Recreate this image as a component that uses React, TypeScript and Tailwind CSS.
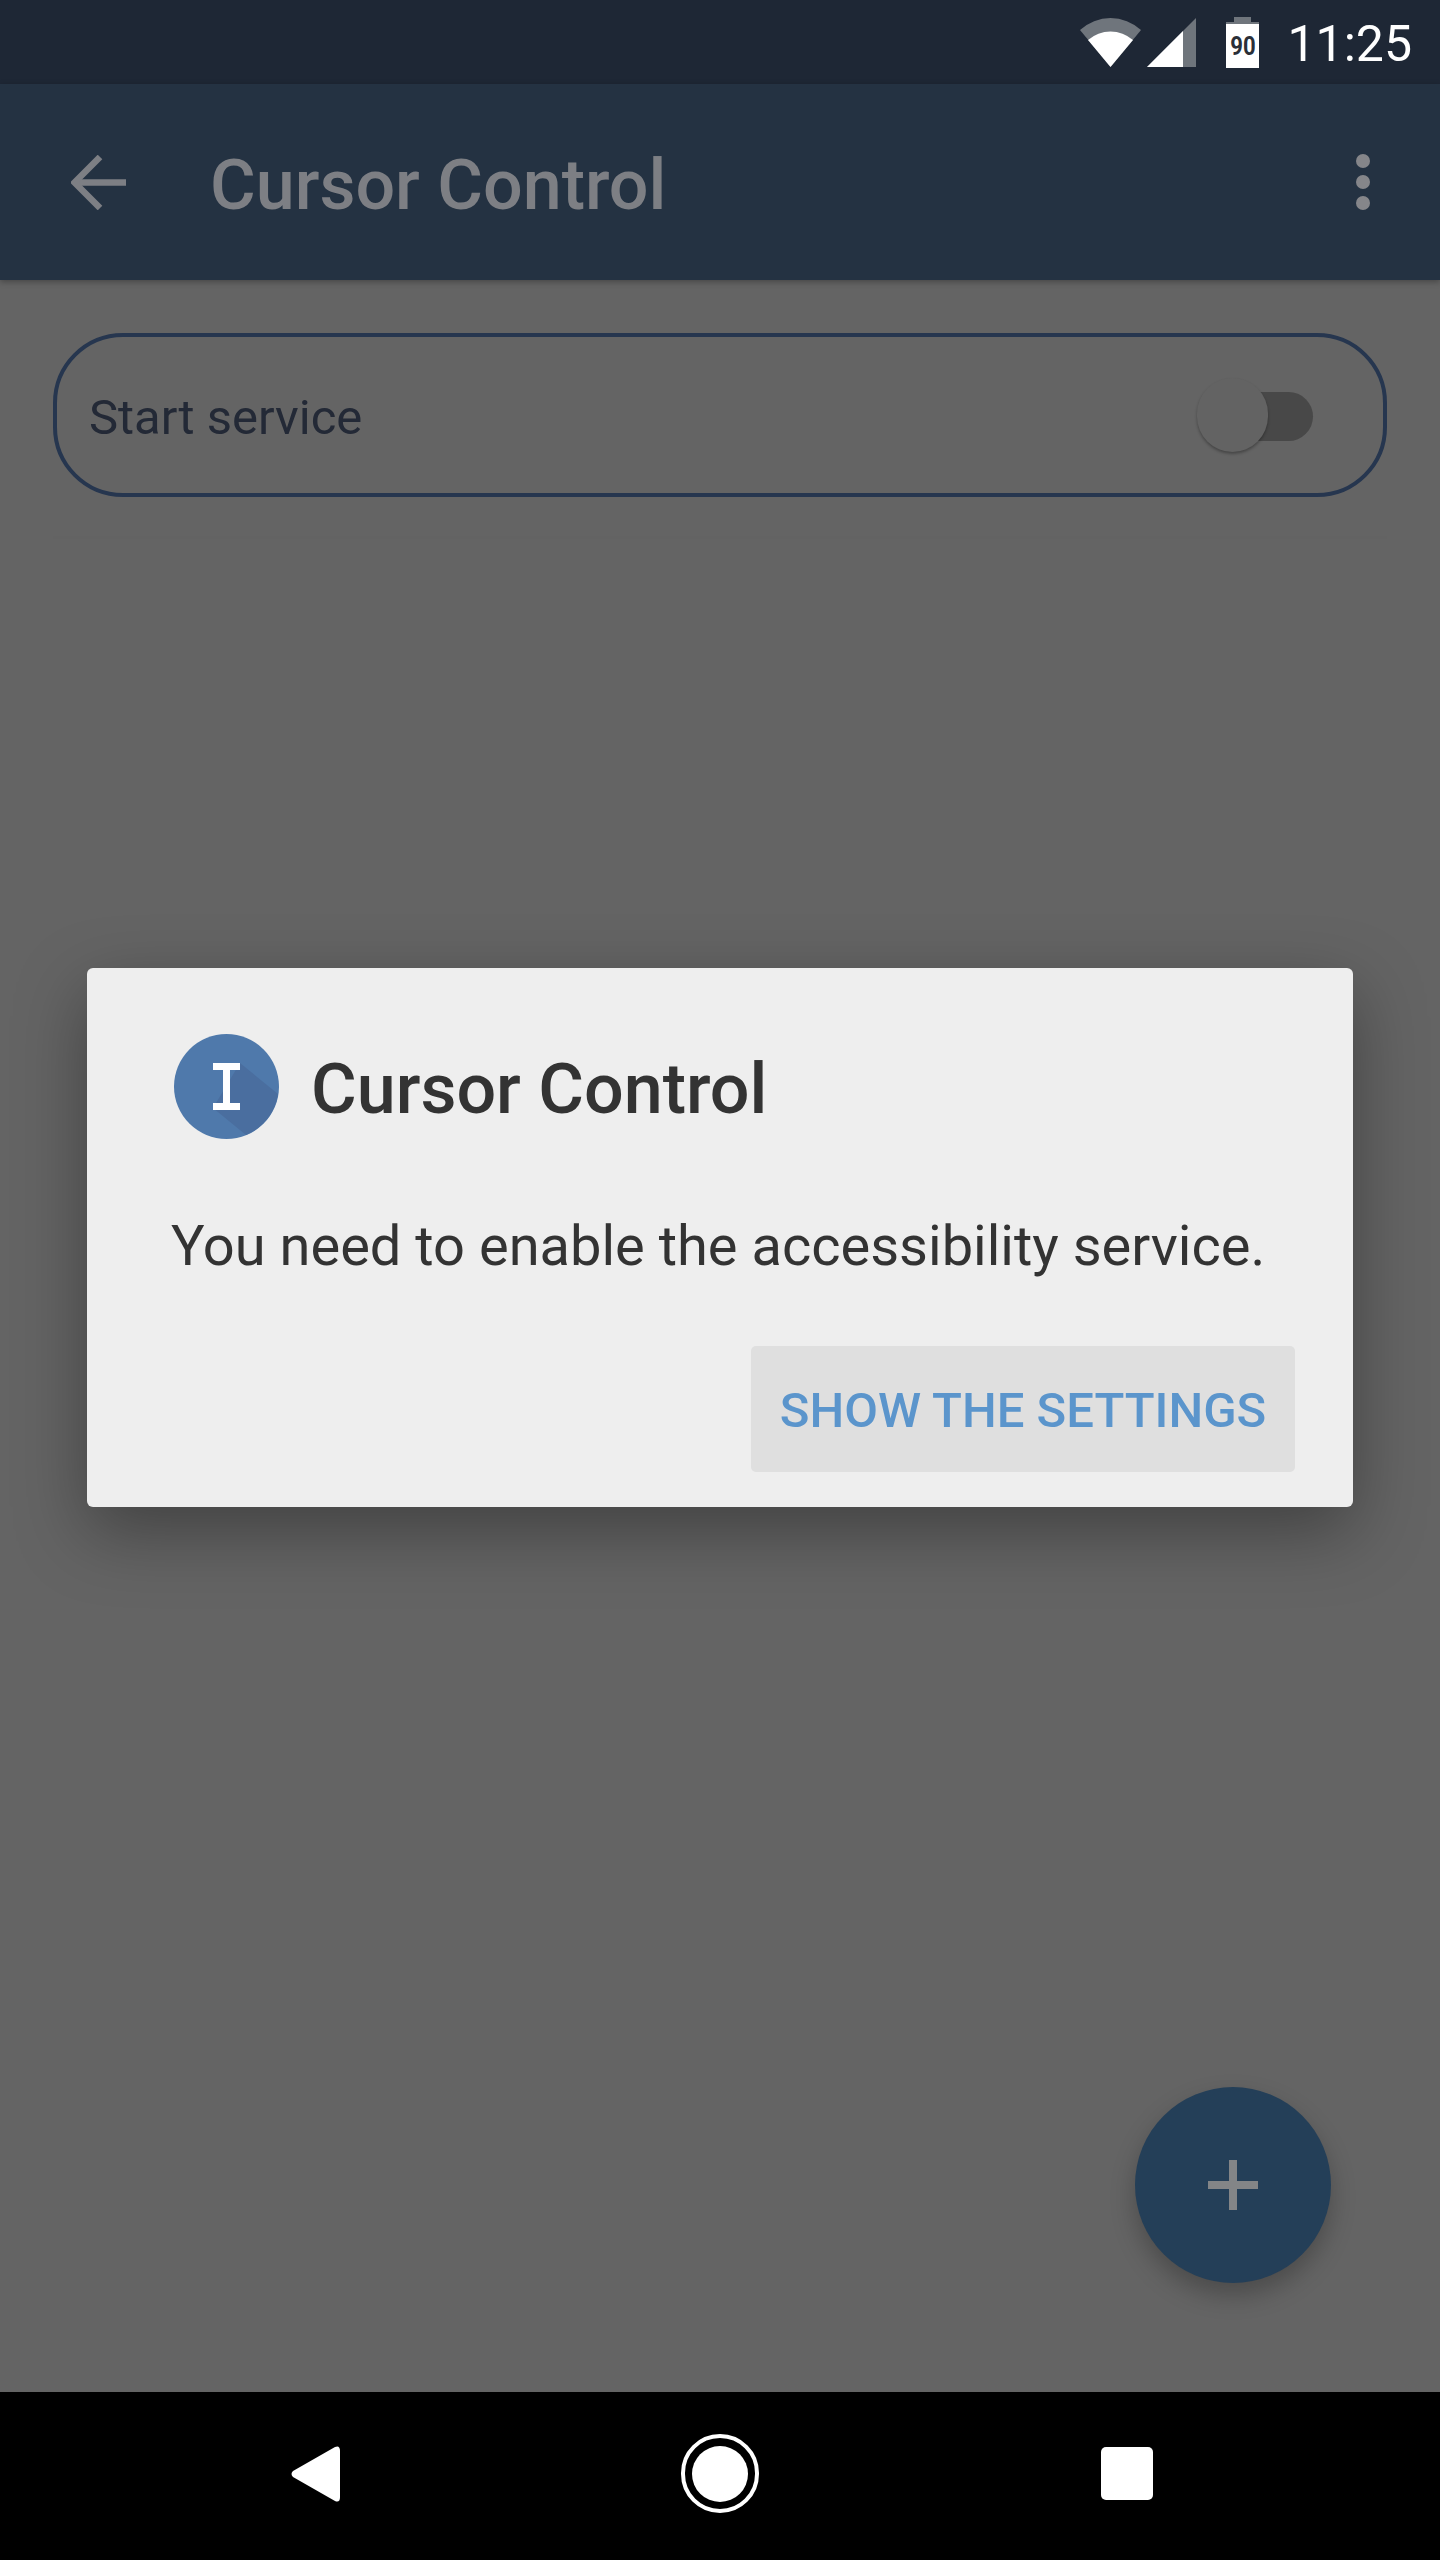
import React from 'react';

const ROBOTO = "font-['Roboto',sans-serif]";

function StatusIcons() {
  return (
    <div className="flex items-center">
      {/* wifi, outer band is the dimmed part */}
      <svg width="61" height="49" viewBox="0 0 61 49" className="mr-[6px]">
        <path d="M0 12 A45 45 0 0 1 61 12 L30.5 49 Z" fill="#6f757c" />
        <path d="M8 22 A34 34 0 0 1 53 22 L30.5 49 Z" fill="#ffffff" />
      </svg>
      <svg width="49" height="49" viewBox="0 0 49 49" className="mr-[30px]">
        <path d="M0 49 L49 0 L49 49 Z" fill="#6f757c" />
        <path d="M0 49 L36 13 L36 49 Z" fill="#ffffff" />
      </svg>
      <div className="mr-[28px] flex h-[51px] w-[33px] flex-col items-center">
        <div className="h-[5px] w-[17px] bg-[#6f757c]" />
        <div className="h-[2px] w-full bg-[#6f757c]" />
        <div className="flex h-[44px] w-full items-center justify-center bg-white text-[26px] leading-none font-bold text-[#2a2f38]">
          <span className="scale-x-[0.85]">90</span>
        </div>
      </div>
    </div>
  );
}

function BackArrow() {
  return (
    <svg width="55" height="55" viewBox="0 0 55 55" fill="none" stroke="#7d7f84" strokeWidth="6.5">
      <path d="M55 27.5 H4" />
      <path d="M29 2 L3.5 27.5 L29 53" />
    </svg>
  );
}

function OverflowDots() {
  return (
    <div className="flex flex-col gap-[7px]">
      <div className="h-[14px] w-[14px] rounded-full bg-[#85868a]" />
      <div className="h-[14px] w-[14px] rounded-full bg-[#85868a]" />
      <div className="h-[14px] w-[14px] rounded-full bg-[#85868a]" />
    </div>
  );
}

function ServiceSwitch() {
  return (
    <div className="flex h-[74px] w-[116px] items-center justify-end pt-[3px]">
      <div className="relative h-[49px] w-[80px] rounded-r-full bg-[#484848]">
        <div className="absolute top-[-14px] left-[-36px] h-[74px] w-[71px] rounded-full bg-[#636363] shadow-[0_2px_3px_rgba(0,0,0,0.3)]" />
      </div>
    </div>
  );
}

function AppLogo() {
  return (
    <svg width="105" height="105" viewBox="0 0 105 105">
      <circle cx="52.5" cy="52.5" r="52.5" fill="#4f79ab" />
      <path d="M66 29 L104 60 A52.5 52.5 0 0 1 72 101 L39 74 Z" fill="#4a6e9f" />
      <path d="M39 29 H66 V36 H56 V69 H66 V76 H39 V69 H49 V36 H39 Z" fill="#ffffff" />
    </svg>
  );
}

function NavBar() {
  return (
    <div className="flex h-[168px] shrink-0 items-center bg-black pb-[5px]">
      <div className="ml-[291px] h-[56px] w-[49px]">
        <svg width="49" height="56" viewBox="0 0 49 56">
          <path d="M44 1 Q49 -1 49 5 V51 Q49 57 44 55 L2 31 Q-1 28 2 25 Z" fill="#ffffff" />
        </svg>
      </div>
      <div className="ml-[341px] flex h-[79px] w-[78px] items-center justify-center rounded-full border-[4px] border-white">
        <div className="h-[56px] w-[56px] rounded-full bg-white" />
      </div>
      <div className="ml-[342px] h-[53px] w-[52px] rounded-[5px] bg-white" />
    </div>
  );
}

export default function App() {
  return (
    <div className={`relative flex h-[2560px] w-[1440px] flex-col overflow-hidden bg-[#646464] ${ROBOTO}`}>
      <div className="flex h-[84px] shrink-0 items-center justify-end bg-[#1e2735] pr-[28px]">
        <StatusIcons />
        <span className="pt-[4px] text-[50px] leading-none font-normal text-white">11:25</span>
      </div>

      <div className="z-10 flex h-[196px] shrink-0 items-center bg-[#243242] shadow-[0_2px_6px_rgba(0,0,0,0.3)]">
        <div className="ml-[71px]">
          <BackArrow />
        </div>
        <h1 className="ml-[84px] flex-1 pt-[5px] text-[70px] leading-none font-medium text-[#7d7f84]">Cursor Control</h1>
        <div className="mr-[70px]">
          <OverflowDots />
        </div>
      </div>

      <div className="flex-1 bg-[#646464] px-[53px] pt-[53px]">
        <div className="flex h-[164px] items-center justify-between rounded-[70px] border-[4px] border-[#26364f] pr-[70px] pl-[32px]">
          <span className="pt-[4px] text-[49px] leading-none text-[#232936]">Start service</span>
          <ServiceSwitch />
        </div>
        {/* faint edge left under the card */}
        <div className="mt-[39px] h-[3px] bg-[#636363]" />
      </div>

      <NavBar />

      {/* scrim layer: dialog is centred between the status and nav bars */}
      <div className="absolute inset-x-0 top-[84px] bottom-[168px] z-20 flex items-center justify-center">
        <div className="mb-[1px] h-[539px] w-[1266px] rounded-[6px] bg-[#eeeeee] pt-[66px] pr-[58px] pl-[84px] shadow-[0_24px_70px_rgba(0,0,0,0.35)]">
          <div className="flex items-center pl-[3px]">
            <AppLogo />
            <span className="ml-[32px] pt-[5px] text-[70px] leading-none font-medium text-[#333333]">Cursor Control</span>
          </div>
          <p className="mt-[79px] text-[56px] leading-none whitespace-nowrap text-[#333333]">
            You need to enable the accessibility service.
          </p>
          <div className="mt-[72px] flex justify-end">
            <button
              type="button"
              className="flex h-[126px] w-[544px] items-center justify-center rounded-[5px] bg-[#dfdfdf] pt-[2px] text-[49px] leading-none font-medium text-[#5b95cc]"
            >
              SHOW THE SETTINGS
            </button>
          </div>
        </div>
      </div>

      <button
        type="button"
        className="absolute top-[2087px] left-[1135px] flex h-[196px] w-[196px] items-center justify-center rounded-full bg-[#243f58] shadow-[0_12px_24px_rgba(0,0,0,0.25)]"
      >
        <svg width="50" height="50" viewBox="0 0 50 50">
          <path d="M21 0 H29 V21 H50 V29 H29 V50 H21 V29 H0 V21 H21 Z" fill="#838587" />
        </svg>
      </button>
    </div>
  );
}
